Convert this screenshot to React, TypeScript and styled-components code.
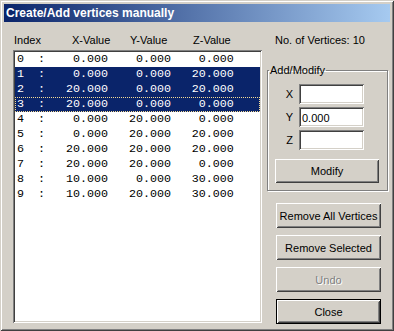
import styled, { createGlobalStyle } from 'styled-components';

const GlobalStyle = createGlobalStyle`
  html, body {
    margin: 0;
    padding: 0;
    background: #d4d0c8;
  }
  * {
    box-sizing: border-box;
  }
`;

const vertices: [number, number, number][] = [
  [0, 0, 0],
  [0, 0, 20],
  [20, 0, 20],
  [20, 0, 0],
  [0, 20, 0],
  [0, 20, 20],
  [20, 20, 20],
  [20, 20, 0],
  [10, 0, 30],
  [10, 20, 30],
];

const selected = [1, 2, 3];
const focused = 3;

const Window = styled.div`
  width: 394px;
  height: 331px;
  padding: 4px;
  display: flex;
  flex-direction: column;
  background: #d4d0c8;
  box-shadow: inset 1px 1px 0 #d4d0c8, inset -1px -1px 0 #404040,
    inset 2px 2px 0 #ffffff, inset -2px -2px 0 #808080;
  font-family: 'Liberation Sans', Arial, sans-serif;
  font-size: 11px;
  color: #000;
`;

const TitleBar = styled.div`
  height: 18px;
  display: flex;
  align-items: center;
  padding-left: 2px;
  background: linear-gradient(to right, #0a246a, #a6caf0);
  color: #fff;
  font-weight: bold;
  font-size: 12px;
`;

const Body = styled.div`
  flex: 1;
  display: flex;
  gap: 5px;
  padding: 12px 0 0 9px;
`;

const LeftColumn = styled.div`
  width: 249px;
  display: flex;
  flex-direction: column;
`;

const HeaderRow = styled.div`
  height: 13px;
  line-height: 13px;
  display: grid;
  grid-template-columns: 58px 58px 63px 60px;
  padding-left: 1px;
`;

const HeaderCell = styled.span``;

const ListBox = styled.div`
  margin-top: 3px;
  height: 273px;
  padding: 2px;
  background: #fff;
  box-shadow: inset 1px 1px 0 #808080, inset -1px -1px 0 #ffffff,
    inset 2px 2px 0 #404040, inset -2px -2px 0 #d4d0c8;
`;

const Row = styled.div<{ $selected: boolean; $focused: boolean }>`
  height: 15px;
  line-height: 15px;
  padding-left: 2px;
  white-space: pre;
  font-family: 'Liberation Mono', 'Courier New', monospace;
  font-size: 11.67px;
  background: ${(p) => (p.$selected ? '#0a246a' : 'transparent')};
  color: ${(p) => (p.$selected ? '#fff' : '#000')};
  outline: ${(p) => (p.$focused ? '1px dotted #f5db95' : 'none')};
  outline-offset: -1px;
`;

const RightColumn = styled.div`
  width: 121px;
  display: flex;
  flex-direction: column;
`;

const CountLabel = styled.div`
  height: 13px;
  line-height: 13px;
  padding-left: 8px;
`;

const GroupBox = styled.fieldset`
  margin: 17px 0 0 0;
  padding: 7px 0 7px 0;
  min-width: 0;
  border: 1px solid #808080;
  box-shadow: inset 1px 1px 0 #fff, 1px 1px 0 #fff;
  display: flex;
  flex-direction: column;
`;

const Legend = styled.legend`
  margin-left: 1px;
  padding: 0 1px;
  line-height: 13px;
`;

const FieldRow = styled.div`
  display: grid;
  grid-template-columns: 31px 65px;
  align-items: center;
  margin-bottom: 3px;
`;

const FieldLabel = styled.label`
  justify-self: end;
  margin-right: 6px;
  color: #000;
  font-size: 11px;
`;

const Edit = styled.input`
  width: 65px;
  height: 20px;
  border: none;
  padding: 2px 3px 0;
  background: #fff;
  font-family: 'Liberation Sans', Arial, sans-serif;
  font-size: 11px;
  color: #000;
  box-shadow: inset 1px 1px 0 #808080, inset -1px -1px 0 #ffffff,
    inset 2px 2px 0 #404040, inset -2px -2px 0 #d4d0c8;
  outline: none;
`;

const Button = styled.button<{ $default?: boolean }>`
  width: 105px;
  height: 25px;
  padding: 0;
  background: #d4d0c8;
  border: ${(p) => (p.$default ? '1px solid #000' : 'none')};
  font-family: 'Liberation Sans', Arial, sans-serif;
  font-size: 11px;
  color: #000;
  box-shadow: inset 1px 1px 0 #ffffff, inset -1px -1px 0 #404040,
    inset 2px 2px 0 #d4d0c8, inset -2px -2px 0 #808080;
  cursor: default;

  &:disabled {
    color: #808080;
    text-shadow: 1px 1px 0 #fff;
  }
`;

const ModifyButton = styled(Button)`
  width: 104px;
  height: 24px;
  margin: 6px 0 0 7px;
`;

const ButtonStack = styled.div`
  display: flex;
  flex-direction: column;
  gap: 7px;
  margin: 12px 0 0 9px;
`;

const fmt = (n: number) => n.toFixed(3).padStart(9, ' ');

export default function App() {
  return (
    <>
      <GlobalStyle />
      <Window>
        <TitleBar>Create/Add vertices manually</TitleBar>
        <Body>
          <LeftColumn>
            <HeaderRow>
              <HeaderCell>Index</HeaderCell>
              <HeaderCell>X-Value</HeaderCell>
              <HeaderCell>Y-Value</HeaderCell>
              <HeaderCell>Z-Value</HeaderCell>
            </HeaderRow>
            <ListBox>
              {vertices.map(([x, y, z], i) => (
                <Row
                  key={i}
                  $selected={selected.includes(i)}
                  $focused={i === focused}
                >
                  {`${i}  :${fmt(x)}${fmt(y)}${fmt(z)}`}
                </Row>
              ))}
            </ListBox>
          </LeftColumn>
          <RightColumn>
            <CountLabel>No. of Vertices: {vertices.length}</CountLabel>
            <GroupBox>
              <Legend>Add/Modify</Legend>
              <FieldRow>
                <FieldLabel>X</FieldLabel>
                <Edit defaultValue="" />
              </FieldRow>
              <FieldRow>
                <FieldLabel>Y</FieldLabel>
                <Edit defaultValue="0.000" />
              </FieldRow>
              <FieldRow>
                <FieldLabel>Z</FieldLabel>
                <Edit defaultValue="" />
              </FieldRow>
              <ModifyButton>Modify</ModifyButton>
            </GroupBox>
            <ButtonStack>
              <Button>Remove All Vertices</Button>
              <Button>Remove Selected</Button>
              <Button disabled>Undo</Button>
              <Button $default>Close</Button>
            </ButtonStack>
          </RightColumn>
        </Body>
      </Window>
    </>
  );
}
